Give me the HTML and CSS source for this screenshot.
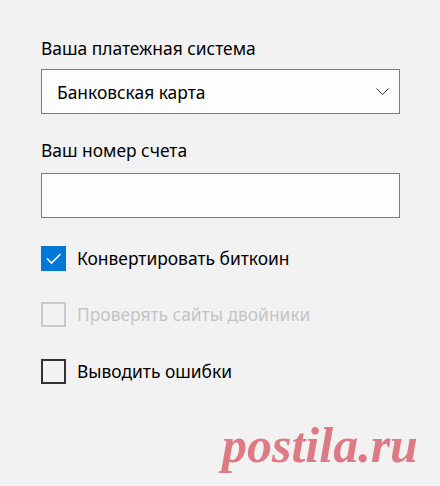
FILE: index.html
```html
<!DOCTYPE html>
<html lang="ru">
<head>
<meta charset="utf-8">
<link rel="stylesheet" href="styles.css">
</head>
<body>
<div class="form">
  <div class="label">Ваша платежная система</div>
  <div class="select">
    <span class="select-text">Банковская карта</span>
    <svg class="chevron" width="13" height="7" viewBox="0 0 13 7"><polyline points="0.5,0.5 6.5,6.5 12.5,0.5" fill="none" stroke="#333" stroke-width="1"/></svg>
  </div>
  <div class="label label-2">Ваш номер счета</div>
  <div class="input"></div>
  <div class="check check-first">
    <span class="box box-checked">
      <svg width="25" height="25" viewBox="0 0 25 25"><polyline points="6,12.5 10.5,17 19.5,8" fill="none" stroke="#fff" stroke-width="1.6"/></svg>
    </span>
    <span class="check-text">Конвертировать биткоин</span>
  </div>
  <div class="check check-disabled">
    <span class="box"></span>
    <span class="check-text">Проверять сайты двойники</span>
  </div>
  <div class="check check-last">
    <span class="box"></span>
    <span class="check-text">Выводить ошибки</span>
  </div>
</div>
<div class="watermark">postila.ru</div>
</body>
</html>
```
FILE: styles.css
```css
html, body {
  margin: 0;
  padding: 0;
  background: #f2f2f2;
  width: 440px;
  height: 486px;
  overflow: hidden;
  position: relative;
  font-family: "Noto Sans", "Open Sans", sans-serif;
  color: #000;
}
.form {
  padding: 37px 40px 0 41px;
  display: flex;
  flex-direction: column;
}
.label {
  font-size: 17.4px;
  line-height: 22px;
  height: 22px;
}
.label-2 {
  margin-top: 25px;
}
.select {
  margin-top: 10px;
  height: 45px;
  box-sizing: border-box;
  border: 1px solid #7a7a7a;
  background: #fdfdfd;
  display: flex;
  align-items: center;
  justify-content: space-between;
  padding: 0 10px 0 15px;
}
.select-text {
  font-size: 17.4px;
}
.chevron {
  display: block;
}
.input {
  margin-top: 12px;
  height: 45px;
  box-sizing: border-box;
  border: 1px solid #7a7a7a;
  background: #fdfdfd;
}
.check {
  display: flex;
  align-items: center;
  height: 25px;
  margin-top: 31px;
}
.check-first {
  margin-top: 28px;
}
.check-last {
  margin-top: 32px;
}
.box {
  width: 25px;
  height: 25px;
  box-sizing: border-box;
  border: 2px solid #333;
  margin-right: 11px;
  flex: none;
}
.box svg {
  display: block;
  margin: -2px;
}
.box-checked {
  background: #0078d7;
  border-color: #0078d7;
}
.check-text {
  font-size: 17.4px;
  line-height: 25px;
}
.check-disabled .box {
  border-color: #c9c9c9;
}
.check-disabled .check-text {
  color: #c4c4c4;
}
.watermark {
  position: absolute;
  left: 222px;
  top: 415px;
  font-family: "Liberation Serif", serif;
  font-style: italic;
  font-weight: bold;
  font-size: 50px;
  line-height: 60px;
  color: #de7a84;
}
```
